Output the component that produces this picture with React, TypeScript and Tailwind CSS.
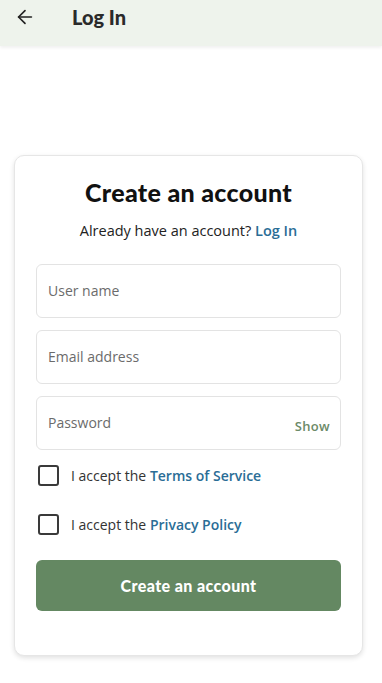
import { ArrowLeft } from "lucide-react";

const body = { fontFamily: '"Open Sans", "Noto Sans", sans-serif' };
const heavy = { fontFamily: 'Lato, "Liberation Sans", sans-serif' };

function Field({ label, action }: { label: string; action?: string }) {
  return (
    <div className="flex h-[54px] items-center justify-between rounded-md border border-[#e3e3e3] bg-white pl-[11px] pr-[10px]">
      <span className="-mt-[1px] text-[14px] text-[#6b6b6b]">{label}</span>
      {action && (
        <span className="mt-[6px] text-[13px] font-semibold tracking-wide text-[#6c8a68]">
          {action}
        </span>
      )}
    </div>
  );
}

function Check({ link }: { link: string }) {
  return (
    <div className="flex items-center gap-[12px] pl-[2px]">
      <div className="h-[21px] w-[21px] rounded-[3px] border-2 border-[#3a3a3a]" />
      <p className="text-[14px] text-[#333]">
        I accept the{" "}
        <span className="font-semibold text-[#2a6d96]">{link}</span>
      </p>
    </div>
  );
}

export default function App() {
  return (
    <div className="min-h-[683px] bg-white" style={body}>
      <header className="flex h-[46px] items-center bg-[#eef3ec] px-[14px] shadow-[0_2px_3px_rgba(0,0,0,0.06)]">
        <ArrowLeft size={22} strokeWidth={1.8} className="-mt-[12px] text-[#222]" />
        <h1
          className="-mt-[12px] ml-[36px] text-[20px] font-black text-[#2a2a2a]"
          style={heavy}
        >
          Log In
        </h1>
      </header>

      <main className="pl-[14px] pr-[19px] pt-[109px]">
        <div className="rounded-[10px] border border-[#e6e6e6] bg-white px-[21px] pb-[44px] pt-[18px] shadow-[0_2px_5px_rgba(0,0,0,0.12)]">
          <h2
            className="text-center text-[25px] font-black tracking-[0.3px] text-[#111]"
            style={heavy}
          >
            Create an account
          </h2>
          <p className="mt-[8px] text-center text-[14.5px] text-[#222]">
            Already have an account?{" "}
            <span className="font-semibold text-[#2a6d96]">Log In</span>
          </p>

          <div className="mt-[23px] flex flex-col gap-[12px]">
            <Field label="User name" />
            <Field label="Email address" />
            <Field label="Password" action="Show" />
          </div>

          <div className="mt-[15px] flex flex-col gap-[28px]">
            <Check link="Terms of Service" />
            <Check link="Privacy Policy" />
          </div>

          <button
            className="mt-[25px] h-[51px] w-full rounded-md bg-[#648862] text-[16px] font-black tracking-[0.4px] text-white"
            style={heavy}
          >
            Create an account
          </button>
        </div>
      </main>
    </div>
  );
}
